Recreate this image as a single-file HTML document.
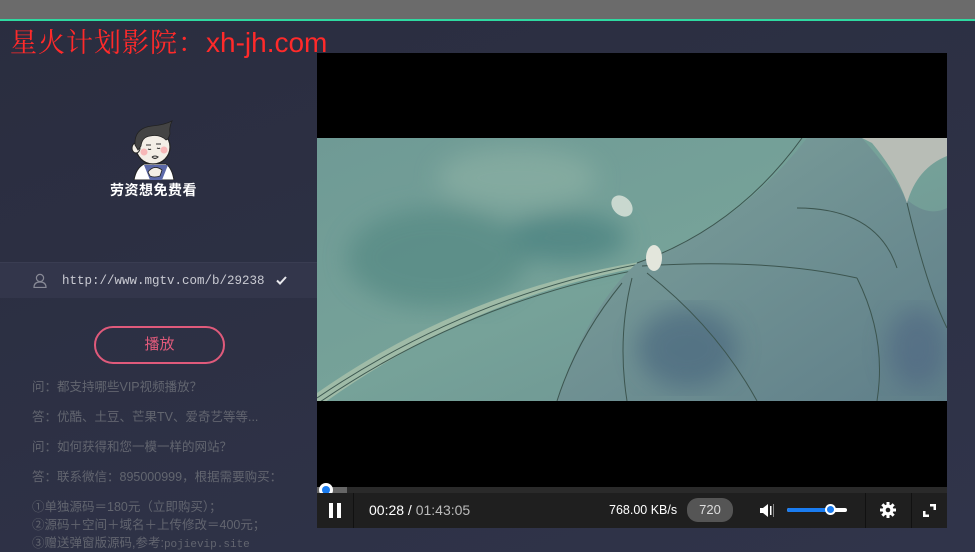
<!DOCTYPE html>
<html><head><meta charset="utf-8"><style>
*{margin:0;padding:0;box-sizing:border-box}
body{width:975px;height:552px;overflow:hidden;background:linear-gradient(160deg,#2a2d3f,#30344a);font-family:"Liberation Sans","Noto Sans CJK SC",sans-serif;position:relative}
.top{position:absolute;left:0;top:0;width:975px;height:19px;background:#6b6b6b}
.green{position:absolute;left:0;top:19px;width:975px;height:2px;background:#2fd9a1}
.title{position:absolute;left:10px;top:21px;font-size:27px;color:#ff2a2a;font-family:"Liberation Sans","Noto Serif CJK SC",sans-serif;white-space:nowrap}
.title span{letter-spacing:1px}
.title b{font-weight:normal;font-family:"Liberation Sans",sans-serif;font-size:28px}
.urlrow{position:absolute;left:0;top:262px;width:317px;height:36px;background:#33364b;border-top:1px solid #3a3d52}
.url{position:absolute;left:62px;top:11px;font-family:"Liberation Mono",monospace;font-size:12.5px;color:#c9cad2}
.btn{position:absolute;left:94px;top:326px;width:131px;height:38px;border:2px solid #e05a7b;border-radius:19px;color:#e05a7b;font-size:15px;text-align:center;line-height:34px}
.faq{position:absolute;left:32px;color:#62656f;font-size:12.5px;white-space:nowrap}
.player{position:absolute;left:317px;top:53px;width:630px;height:475px;background:#000}
.ctrl{position:absolute;left:0;top:440px;width:630px;height:35px;background:#1f1f1f}
.prog{position:absolute;left:0;top:434px;width:630px;height:6px;background:#2a2a2a}
</style></head><body>
<div class="top"></div><div class="green"></div>
<div class="title"><span>星火计划影院：</span><b>xh-jh.com</b></div>

<svg style="position:absolute;left:126px;top:120px" width="56" height="60" viewBox="0 0 56 60">
<path d="M8 60 Q10 48 18 44 L40 44 Q46 48 48 60Z" fill="#fff" stroke="#222" stroke-width="1"/>
<path d="M18 45 L24 60 L36 60 L42 45Z" fill="#5b68a8"/>
<path d="M22 52 Q28 44 36 50 L34 56 Q28 58 24 56Z" fill="#f3eee6" stroke="#222" stroke-width="0.8"/>
<ellipse cx="27" cy="27" rx="17" ry="17" fill="#f3eee6" stroke="#222" stroke-width="1.2"/>
<ellipse cx="10" cy="28" rx="4" ry="5" fill="#f3eee6" stroke="#222"/>
<path d="M9 25 Q8 8 26 6 Q38 5 46 1 Q43 7 44 14 Q42 20 40 20 Q34 14 24 16 Q16 17 15 26 L12 30Z" fill="#444" stroke="#222" stroke-width="0.8"/>
<circle cx="18" cy="32" r="3.5" fill="#f7b8b8"/><circle cx="38" cy="30" r="3.5" fill="#f7b8b8"/>
<path d="M20 25 h5 M30 24 h5 M22 29 q2 1 3 0 M31 28 q2 1 3 0 M26 37 q3 -2 6 0 q-3 3 -6 0" stroke="#333" stroke-width="1.1" fill="none"/>
</svg>
<div style="position:absolute;left:110px;top:180px;color:#fff;font-size:14px;font-weight:bold;letter-spacing:0.5px">劳资想免费看</div>

<div class="urlrow">
<svg style="position:absolute;left:33px;top:10px" width="14" height="15" viewBox="0 0 14 15"><circle cx="7" cy="5" r="3.6" fill="none" stroke="#888a96" stroke-width="1.2"/><path d="M1 14.5 Q1 9 7 9 Q13 9 13 14.5Z" fill="none" stroke="#888a96" stroke-width="1.2"/></svg>
<div class="url">http://www.mgtv.com/b/29238</div>
<svg style="position:absolute;left:276px;top:13px" width="11" height="9" viewBox="0 0 11 9"><path d="M1 4.5 L4 7.5 L10 1" stroke="#e8e8ec" stroke-width="2" fill="none"/></svg>
</div>

<div class="btn">播放</div>
<div class="faq" style="top:376px">问：都支持哪些VIP视频播放？</div>
<div class="faq" style="top:406px">答：优酷、土豆、芒果TV、爱奇艺等等...</div>
<div class="faq" style="top:436px">问：如何获得和您一模一样的网站？</div>
<div class="faq" style="top:466px">答：联系微信：895000999，根据需要购买：</div>
<div class="faq" style="top:496px">①单独源码＝180元（立即购买）；</div>
<div class="faq" style="top:514px">②源码＋空间＋域名＋上传修改＝400元；</div>
<div class="faq" style="top:532px">③赠送弹窗版源码,参考:<span style="font-family:'Liberation Mono',monospace;font-size:11px">pojievip.site</span></div>

<div class="player">
<svg style="position:absolute;left:0;top:85px" width="630" height="263" viewBox="0 0 630 263">
<defs>
<linearGradient id="g1" x1="0" y1="0" x2="1" y2="1"><stop offset="0" stop-color="#6f9a95"/><stop offset="0.5" stop-color="#76a299"/><stop offset="1" stop-color="#6a8f90"/></linearGradient>
<linearGradient id="g2" x1="0" y1="0" x2="1" y2="1"><stop offset="0" stop-color="#7fa39c"/><stop offset="1" stop-color="#5f7e89"/></linearGradient>
<filter id="bl"><feGaussianBlur stdDeviation="12"/></filter>
</defs>
<rect width="630" height="263" fill="url(#g1)"/>
<g filter="url(#bl)" opacity="0.6"><ellipse cx="120" cy="120" rx="90" ry="50" fill="#4f8580"/><ellipse cx="250" cy="100" rx="60" ry="25" fill="#3f7a7a"/><ellipse cx="200" cy="40" rx="80" ry="30" fill="#8fb2a6"/></g>
<path d="M0 270 Q150 160 330 128 L335 122 Q150 150 0 255Z" fill="#9fbba7"/>
<path d="M0 260 Q150 158 328 125" stroke="#3f5a52" stroke-width="1" fill="none"/>
<path d="M0 266 Q150 163 330 130" stroke="#3f5a52" stroke-width="1" fill="none"/>
<path d="M320 125 Q420 90 490 0 L545 0 Q580 40 588 60 Q610 80 630 70 L630 263 L240 263 Q270 170 320 125Z" fill="url(#g2)"/>
<g filter="url(#bl)" opacity="0.5"><ellipse cx="370" cy="210" rx="50" ry="40" fill="#3e5a78"/><ellipse cx="600" cy="210" rx="30" ry="40" fill="#4a5e80"/></g>
<path d="M545 0 L630 0 L630 18 Q600 30 590 65 Q580 35 555 5Z" fill="#b8bdb6"/>
<path d="M320 125 Q420 90 485 0 M325 128 Q450 120 540 140 M330 135 Q400 190 440 263 M315 140 Q300 200 310 263 M305 145 Q260 200 240 263 M480 70 Q560 70 580 130 M540 140 Q570 200 560 263 M590 65 Q610 150 630 190" stroke="#3c554f" stroke-width="1" fill="none"/>
<ellipse cx="305" cy="68" rx="9" ry="12" transform="rotate(-45 305 68)" fill="#c9d8cf"/>
<ellipse cx="337" cy="120" rx="8" ry="13" fill="#e3e6dc"/>
</svg>
<div class="prog"><div style="position:absolute;left:0;top:0;width:30px;height:6px;background:#666"></div><div style="position:absolute;left:2px;top:-4px;width:14px;height:14px;border-radius:50%;background:#fff"><div style="margin:3px;width:8px;height:8px;border-radius:50%;background:#1a7cf0"></div></div></div>
<div class="ctrl">
<div style="position:absolute;left:12px;top:10px;width:4px;height:15px;background:#fff"></div>
<div style="position:absolute;left:20px;top:10px;width:4px;height:15px;background:#fff"></div>
<div style="position:absolute;left:36px;top:0;width:1px;height:35px;background:#111"></div>
<div style="position:absolute;left:52px;top:9px;font-size:14px;color:#fff">00:28 / <span style="color:#bbb">01:43:05</span></div>
<div style="position:absolute;left:292px;top:10px;font-size:12.5px;color:#fff">768.00 KB/s</div>
<div style="position:absolute;left:370px;top:5px;width:46px;height:24px;border-radius:11px;background:#555;color:#ddd;font-size:13px;text-align:center;line-height:24px">720</div>
<svg style="position:absolute;left:442px;top:10px" width="16" height="15" viewBox="0 0 16 15"><path d="M1 5 H4 L9 1 V14 L4 10 H1Z" fill="#fff"/><rect x="11" y="3" width="1.5" height="9" fill="#fff"/><rect x="14" y="1" width="1" height="13" fill="#888"/></svg>
<div style="position:absolute;left:470px;top:15px;width:60px;height:4px;border-radius:2px;background:#fff"></div>
<div style="position:absolute;left:470px;top:15px;width:44px;height:4px;border-radius:2px;background:#1a7cf0"></div>
<div style="position:absolute;left:508px;top:11px;width:11px;height:11px;border-radius:50%;background:#fff"><div style="margin:2px;width:7px;height:7px;border-radius:50%;background:#1a7cf0"></div></div>
<div style="position:absolute;left:548px;top:0;width:1px;height:35px;background:#111"></div>
<svg style="position:absolute;left:562px;top:8px" width="18" height="18" viewBox="0 0 18 18"><g fill="#fff"><circle cx="9" cy="9" r="5.5"/><rect x="7.5" y="1" width="3" height="16"/><rect x="1" y="7.5" width="16" height="3"/><rect x="7.5" y="1" width="3" height="16" transform="rotate(45 9 9)"/><rect x="7.5" y="1" width="3" height="16" transform="rotate(-45 9 9)"/></g><circle cx="9" cy="9" r="2.3" fill="#1f1f1f"/></svg>
<div style="position:absolute;left:594px;top:0;width:1px;height:35px;background:#111"></div>
<svg style="position:absolute;left:605px;top:10px" width="15" height="15" viewBox="0 0 15 15"><path d="M8 1 H14 V7 H11.5 V3.5 H8Z M1 8 H3.5 V11.5 H7 V14 H1Z" fill="#fff"/></svg>
</div>
</div>
</body></html>
